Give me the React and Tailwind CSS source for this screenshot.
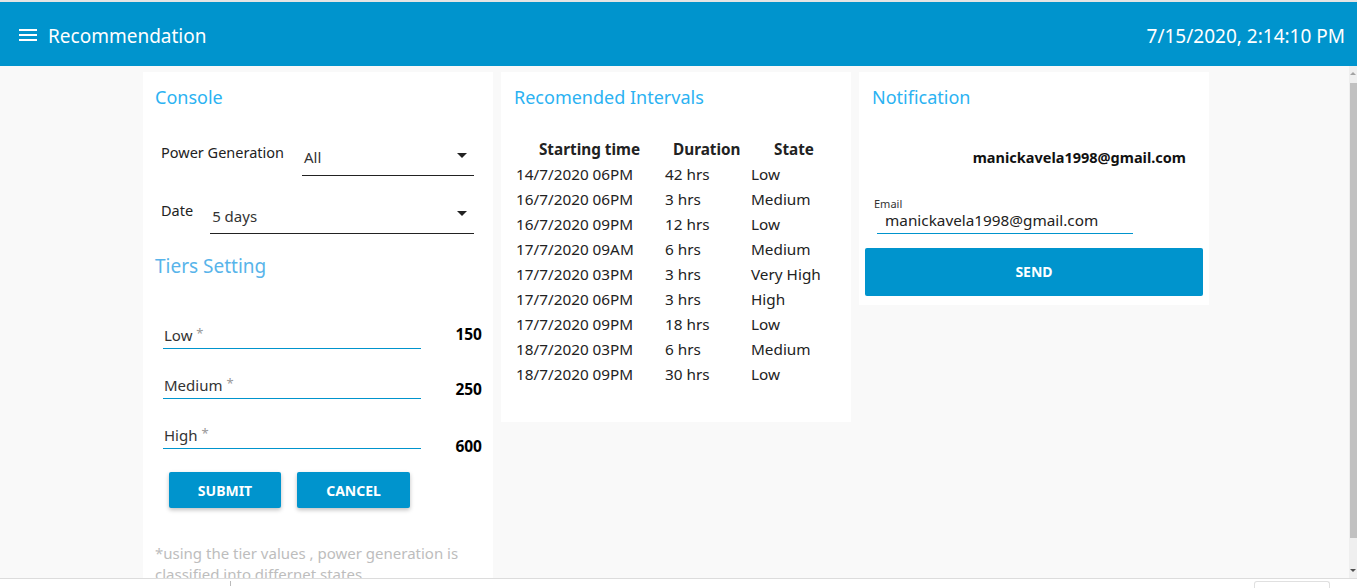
import React from "react";

const rows = [
  ["14/7/2020 06PM", "42 hrs", "Low"],
  ["16/7/2020 06PM", "3 hrs", "Medium"],
  ["16/7/2020 09PM", "12 hrs", "Low"],
  ["17/7/2020 09AM", "6 hrs", "Medium"],
  ["17/7/2020 03PM", "3 hrs", "Very High"],
  ["17/7/2020 06PM", "3 hrs", "High"],
  ["17/7/2020 09PM", "18 hrs", "Low"],
  ["18/7/2020 03PM", "6 hrs", "Medium"],
  ["18/7/2020 09PM", "30 hrs", "Low"],
];

function Caret() {
  return (
    <svg width="10" height="5" viewBox="0 0 10 5" className="shrink-0">
      <path d="M0 0 L10 0 L5 5 Z" fill="#222" />
    </svg>
  );
}

function Tier({ label, value, valueOffset }) {
  return (
    <div className="flex items-start h-[50px]">
      <div className="ml-[8px] w-[258px] h-[40px] flex items-end border-b border-[#0094cd]">
        <span className="pl-[1px] pb-[2px] text-[15px] text-[#333]">
          {label} <span className="text-[#999] text-[13px] align-top">*</span>
        </span>
      </div>
      <div className={"ml-auto -mr-[1px] text-[15.5px] font-bold text-black " + valueOffset}>{value}</div>
    </div>
  );
}

export default function App() {
  return (
    <div
      className="w-[1357px] h-[588px] overflow-hidden flex flex-col bg-[#f9f9f9]"
      style={{ fontFamily: '"Noto Sans", "Open Sans", sans-serif' }}
    >
      <div className="h-[2px] bg-[#e4e4e4]" />
      <header className="h-[64px] bg-[#0094cd] flex items-center text-white shrink-0 pt-[4px]">
        <svg width="18" height="14" viewBox="0 0 18 14" className="ml-[19px] -mt-[2px]">
          <rect x="0" y="1" width="18" height="2" fill="white" />
          <rect x="0" y="6" width="18" height="2" fill="white" />
          <rect x="0" y="11" width="18" height="2" fill="white" />
        </svg>
        <div className="ml-[11px] text-[19px] leading-none">Recommendation</div>
        <div className="ml-auto mr-[12px] text-[19px] leading-none">7/15/2020, 2:14:10 PM</div>
      </header>

      <div className="flex-1 flex min-h-0">
        <main className="flex-1 min-w-0 overflow-hidden">
          <div className="ml-[143px] mt-[6px] flex items-start gap-[8px]">
            {/* Console card */}
            <section className="w-[350px] h-[520px] bg-white px-[12px] pt-[14px]">
              <h2 className="text-[18px] text-[#2bb2f2] leading-[22px]">Console</h2>
              <div className="mt-[34px] flex items-start">
                <div className="ml-[6px] text-[14.5px] text-[#222] leading-[20px]">Power Generation</div>
                <div className="ml-[18px] w-[172px] h-[34px] border-b border-[#222] flex items-center">
                  <span className="text-[15px] text-[#333] ml-[2px] -mt-[2px]">All</span>
                  <span className="ml-auto mr-[7px] -mt-[6px]"><Caret /></span>
                </div>
              </div>
              <div className="mt-[24px] flex items-start">
                <div className="ml-[6px] text-[14.5px] text-[#222] leading-[20px]">Date</div>
                <div className="ml-[17px] w-[264px] h-[34px] border-b border-[#222] flex items-center">
                  <span className="text-[15px] text-[#333] ml-[2px] -mt-[1px]">5 days</span>
                  <span className="ml-auto mr-[7px] -mt-[6px]"><Caret /></span>
                </div>
              </div>
              <h2 className="mt-[20px] text-[19px] text-[#58b4ea] leading-[24px]">Tiers Setting</h2>
              <div className="mt-[31px]">
                <Tier label="Low" value="150" valueOffset="mt-[14px]" />
                <Tier label="Medium" value="250" valueOffset="mt-[19px]" />
                <Tier label="High" value="600" valueOffset="mt-[26px]" />
              </div>
              <div className="mt-[13px] ml-[14px] flex gap-[16px]">
                <button className="w-[112px] h-[36px] bg-[#0094cd] text-white text-[14px] font-bold rounded-[2px] shadow-[0_2px_4px_rgba(0,0,0,0.25)]">
                  SUBMIT
                </button>
                <button className="w-[113px] h-[36px] bg-[#0094cd] text-white text-[14px] font-bold rounded-[2px] shadow-[0_2px_4px_rgba(0,0,0,0.25)]">
                  CANCEL
                </button>
              </div>
              <p className="mt-[35px] text-[15px] leading-[21px] text-[#bdbdbd]">
                *using the tier values , power generation is classified into differnet states
              </p>
            </section>

            {/* Intervals card */}
            <section className="w-[350px] h-[350px] bg-white px-[13px] pt-[14px]">
              <h2 className="text-[18px] text-[#2bb2f2] leading-[22px]">Recomended Intervals</h2>
              <table className="mt-[28px] text-[15.3px] text-[#222] border-separate border-spacing-0">
                <thead>
                  <tr className="h-[26px]">
                    <th className="w-[151px] font-bold text-center">Starting time</th>
                    <th className="w-[86px] font-bold text-left pl-[8px]">Duration</th>
                    <th className="font-bold text-left pl-[23px]">State</th>
                  </tr>
                </thead>
                <tbody>
                  {rows.map((r) => (
                    <tr key={r[0] + r[2]} className="h-[25px]">
                      <td className="pl-[2px]">{r[0]}</td>
                      <td>{r[1]}</td>
                      <td>{r[2]}</td>
                    </tr>
                  ))}
                </tbody>
              </table>
            </section>

            {/* Notification card */}
            <section className="w-[350px] h-[233px] bg-white px-[6px] pt-[14px]">
              <h2 className="ml-[7px] text-[18px] text-[#2bb2f2] leading-[22px]">Notification</h2>
              <div className="mt-[39px] text-right pr-[17px] text-[14.5px] font-bold text-[#111]">
                manickavela1998@gmail.com
              </div>
              <div className="mt-[29px] ml-[9px] text-[11px] leading-[12px] text-[#333]">Email</div>
              <div className="ml-[12px] w-[256px] h-[24px] border-b border-[#0094cd] flex items-start pt-[1px]">
                <span className="ml-[8px] text-[15.3px] text-[#222] leading-[18px]">manickavela1998@gmail.com</span>
              </div>
              <button className="mt-[14px] w-[338px] h-[48px] bg-[#0094cd] text-white text-[14px] font-bold rounded-[2px]">
                SEND
              </button>
            </section>
          </div>
        </main>

        {/* vertical scrollbar */}
        <div className="w-[8px] bg-[#efefef] flex flex-col items-center">
          <div className="mt-[6px] w-0 h-0 border-l-[3px] border-r-[3px] border-b-[3px] border-l-transparent border-r-transparent border-b-[#a3a3a3]" />
          <div className="mt-[8px] w-[7px] h-[455px] bg-[#c1c1c1]" />
          <div className="mt-auto mb-[6px] w-0 h-0 border-l-[3px] border-r-[3px] border-t-[3px] border-l-transparent border-r-transparent border-t-[#505050]" />
        </div>
      </div>

      {/* bottom strip */}
      <div className="h-[10px] shrink-0 bg-white border-t border-[#dcdcdc] flex items-start">
        <div className="ml-[230px] mt-[2px] w-px h-[5px] bg-[#bbb]" />
        <div className="ml-auto mr-[27px] mt-[2px] w-[76px] h-[8px] border-t border-l border-r border-[#e0e0e0] rounded-t-[3px]" />
      </div>
    </div>
  );
}
